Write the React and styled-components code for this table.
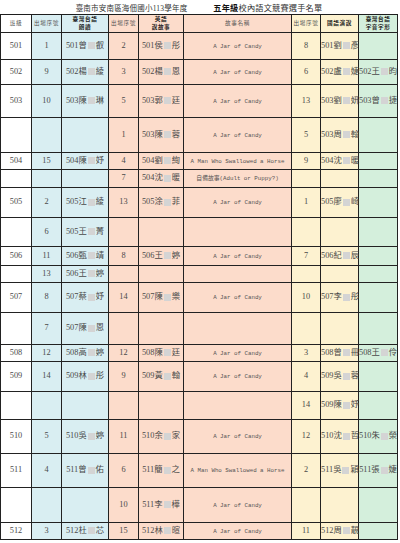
import styled, { createGlobalStyle } from "styled-components"

const Global = createGlobalStyle`
  html, body {
    margin: 0;
    padding: 0;
    background: #fff;
  }
  body {
    width: 400px;
    height: 543px;
    overflow: hidden;
  }
`

const tones = {
  white: '#ffffff',
  blue: '#d9eef2',
  peach: '#fcdccb',
  yellow: '#fdf2d0',
  green: '#d4efdc',
}

const colTones = ['white', 'blue', 'blue', 'peach', 'peach', 'peach', 'yellow', 'yellow', 'green']
const colWidths = [31, 30, 47, 30, 45, 108, 29, 38, 39]

const Sheet = styled.table`
  border-collapse: collapse;
  table-layout: fixed;
  width: 397px;
  font-family: "Liberation Serif", "Noto Sans CJK TC", serif;
  color: #4a4a4a;
`

const TitleCell = styled.td`
  height: 14px;
  padding: 0;
  border-bottom: 1.5px solid #1e1e1e;
`

const TitleLine = styled.div`
  display: flex;
  justify-content: center;
  align-items: center;
  gap: 26px;
  font-size: 7.5px;
  color: #333;
  letter-spacing: 0.2px;
`

const TitleStrong = styled.span`
  font-size: 8.2px;
  b {
    font-weight: 700;
    color: #111;
  }
`

const Row = styled.tr`
  height: ${(p) => p.$h}px;
`

const Cell = styled.td`
  background: ${(p) => tones[p.$tone]};
  border: 1px solid #222;
  padding: 0;
  text-align: center;
  vertical-align: middle;
  white-space: nowrap;
  overflow: visible;
  font-size: 8.3px;
  line-height: 1;
`

const Head = styled(Cell)`
  font-size: 5.6px;
  letter-spacing: 0.6px;
  line-height: 1.35;
  color: #555;
  font-weight: ${(p) => (p.$bold ? 700 : 400)};
  ${(p) => p.$bold && 'color: #222;'}
`

const Story = styled.span`
  font-family: "Liberation Mono", "Noto Sans CJK TC", monospace;
  font-size: 5.8px;
  color: #555;
`

const Blur = styled.span`
  display: inline-block;
  width: 7px;
  height: 7px;
  margin: 0 1px;
  background: #d4d4d4;
  filter: blur(0.6px);
  vertical-align: middle;
`

const heads = [
  { t: '班級' },
  { t: '出場序號' },
  { t: ['臺灣台語', '朗讀'], b: true },
  { t: '出場序號' },
  { t: ['英語', '說故事'], b: true },
  { t: '故事名稱' },
  { t: '出場序號' },
  { t: '國語演說', b: true },
  { t: ['臺灣台語', '字音字形'], b: true },
]

const jar = 'A Jar of Candy'
const horse = 'A Man Who Swallowed a Horse'

const rows = [
  { h: 27, c: ['501', '1', '501曾_叡', '2', '501侯_彤', jar, '8', '501劉_彥', ''] },
  { h: 25, c: ['502', '9', '502楊_綾', '3', '502楊_恩', jar, '6', '502盧_婕', '502王_昀'] },
  { h: 33, c: ['503', '10', '503陳_琳', '5', '503郭_廷', jar, '13', '503劉_妍', '503曾_捷'] },
  { h: 35, c: ['', '', '', '1', '503陳_蓉', jar, '5', '503周_翰', ''] },
  { h: 17, c: ['504', '15', '504陳_妤', '4', '504劉_絢', horse, '9', '504沈_暖', ''] },
  { h: 18, c: ['', '', '', '7', '504沈_暖', '自備故事(Adult or Puppy?)', '', '', ''] },
  { h: 30, c: ['505', '2', '505江_綾', '13', '505涂_菲', jar, '1', '505廖_崎', ''] },
  { h: 29, c: ['', '6', '505王_菁', '', '', '', '', '', ''] },
  { h: 19, c: ['506', '11', '506甄_靖', '8', '506王_婷', jar, '7', '506紀_辰', ''] },
  { h: 17, c: ['', '13', '506王_婷', '', '', '', '', '', ''] },
  { h: 30, c: ['507', '8', '507蔡_妤', '14', '507陳_樂', jar, '10', '507李_彤', ''] },
  { h: 32, c: ['', '7', '507陳_恩', '', '', '', '', '', ''] },
  { h: 17, c: ['508', '12', '508高_婷', '12', '508陳_廷', jar, '3', '508曾_冊', '508王_伶'] },
  { h: 30, c: ['509', '14', '509林_彤', '9', '509黃_翰', jar, '4', '509吳_蓉', ''] },
  { h: 28, c: ['', '', '', '', '', '', '14', '509陳_妤', ''] },
  { h: 34, c: ['510', '5', '510吳_婷', '11', '510余_家', jar, '12', '510沈_哲', '510朱_榮'] },
  { h: 34, c: ['511', '4', '511曾_佑', '6', '511簡_之', horse, '2', '511吳_穎', '511張_婕'] },
  { h: 35, c: ['', '', '', '10', '511李_樺', jar, '', '', ''] },
  { h: 17, c: ['512', '3', '512杜_芯', '15', '512林_暄', jar, '11', '512周_靚', ''] },
]

const Name = ({ v }) => {
  const [a, b] = v.split('_')
  return (
    <>
      {a}
      <Blur />
      {b}
    </>
  )
}

const renderValue = (v, i) => {
  if (!v) return null
  if (i === 5) return <Story>{v}</Story>
  if (v.includes('_')) return <Name v={v} />
  return v
}

export default function App() {
  return (
    <>
      <Global />
      <Sheet>
        <colgroup>
          {colWidths.map((w, i) => (
            <col key={i} style={{ width: w }} />
          ))}
        </colgroup>
        <tbody>
          <tr>
            <TitleCell colSpan={9}>
              <TitleLine>
                <span>臺南市安南區海佃國小113學年度</span>
                <TitleStrong>
                  <b>五年級</b>校內語文競賽選手名單
                </TitleStrong>
              </TitleLine>
            </TitleCell>
          </tr>
          <Row $h={18}>
            {heads.map((h, i) => (
              <Head key={i} $tone={colTones[i]} $bold={h.b}>
                {Array.isArray(h.t) ? (
                  <>
                    {h.t[0]}
                    <br />
                    {h.t[1]}
                  </>
                ) : (
                  h.t
                )}
              </Head>
            ))}
          </Row>
          {rows.map((r, ri) => (
            <Row key={ri} $h={r.h}>
              {r.c.map((v, i) => (
                <Cell key={i} $tone={colTones[i]}>
                  {renderValue(v, i)}
                </Cell>
              ))}
            </Row>
          ))}
        </tbody>
      </Sheet>
    </>
  )
}
